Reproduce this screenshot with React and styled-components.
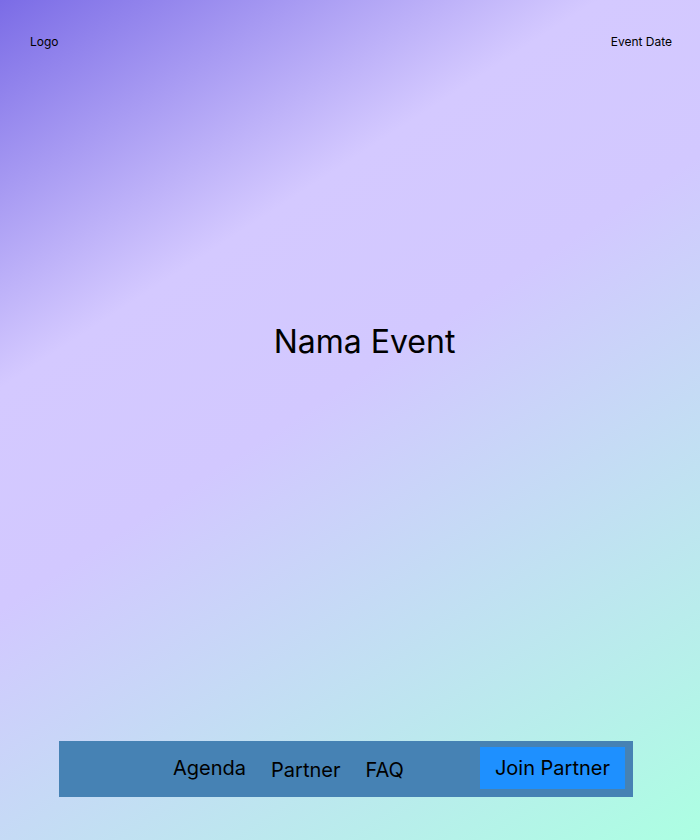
import React from 'react';
import styled, { createGlobalStyle } from 'styled-components';

const GlobalStyle = createGlobalStyle`
  html, body {
    margin: 0;
    padding: 0;
  }
  body {
    font-family: Inter, "Noto Sans", sans-serif;
    color: #000;
  }
`;

const Page = styled.div`
  min-height: 100vh;
  display: flex;
  flex-direction: column;
  background: linear-gradient(
    147deg,
    #7b6ce6 0%,
    #d4c9ff 30%,
    #d2c8ff 47%,
    #acffe2 100%
  );
`;

const Header = styled.header`
  display: flex;
  justify-content: space-between;
  align-items: center;
  padding: 34px 28px 0 30px;
  font-size: 12px;
  line-height: 16px;
`;

const Hero = styled.main`
  flex: 1;
  display: flex;
  align-items: center;
  justify-content: center;
  padding: 0 0 108px 29px;
`;

const Title = styled.h1`
  margin: 0;
  font-size: 32px;
  font-weight: 400;
`;

const Nav = styled.nav`
  display: flex;
  align-items: flex-start;
  margin: 0 67px 43px 59px;
  padding: 6px 8px 8px 114px;
  background-color: steelblue;
`;

const Links = styled.ul`
  display: flex;
  align-items: center;
  gap: 25px;
  height: 42px;
  margin: 0;
  padding: 0;
  list-style: none;
`;

const NavLink = styled.li`
  font-size: 20px;
  line-height: 24px;
  padding-top: ${props => (props.$low ? '4px' : '0')};
`;

const JoinButton = styled.button`
  margin-left: auto;
  padding: 9px 15px;
  border: 0;
  border-radius: 0;
  background-color: dodgerblue;
  color: #000;
  font-family: inherit;
  font-size: 20px;
  line-height: 24px;
`;

export default function App() {
  return (
    <Page>
      <GlobalStyle />
      <Header>
        <span>Logo</span>
        <span>Event Date</span>
      </Header>
      <Hero>
        <Title>Nama Event</Title>
      </Hero>
      <Nav>
        <Links>
          <NavLink>Agenda</NavLink>
          <NavLink $low>Partner</NavLink>
          <NavLink $low>FAQ</NavLink>
        </Links>
        <JoinButton>Join Partner</JoinButton>
      </Nav>
    </Page>
  );
}
